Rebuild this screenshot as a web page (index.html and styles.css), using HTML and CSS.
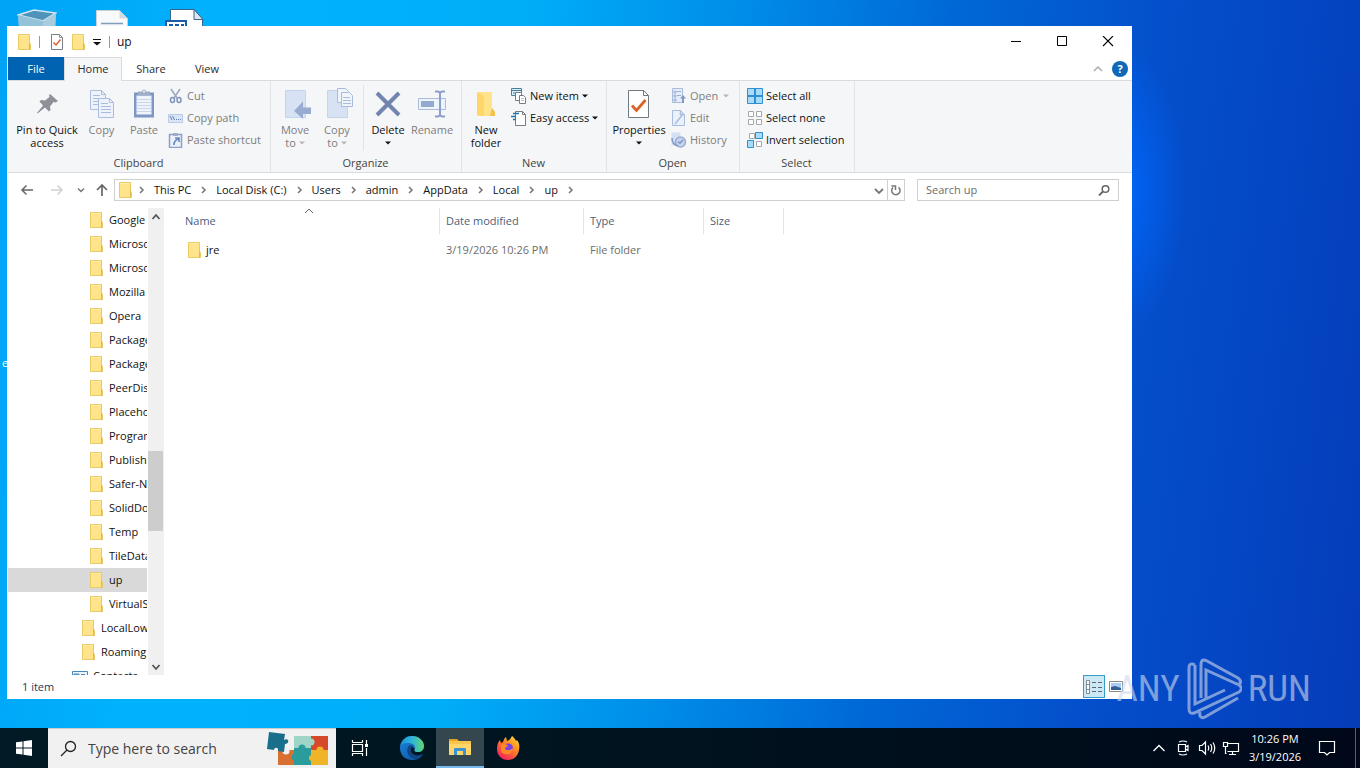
FILE: index.html
```html
<!DOCTYPE html>
<html lang="en">
<head>
<meta charset="utf-8">
<title>up</title>
<link rel="stylesheet" href="styles.css">
</head>
<body>
<svg class="sprite" aria-hidden="true">
  <symbol id="folder" viewBox="0 0 16 16">
    <path d="M1.500.500h11v8.500l1 1.500v5H1.500z" fill="#ffe48c" stroke="#ecca62"/>
    <path d="M12.500 9v6.500" fill="none" stroke="#e3b94a"/>
    <path d="M2.500 1.500h9" stroke="#ffedb0"/>
  </symbol>
  <symbol id="check-page" viewBox="0 0 16 18">
    <path d="M2.500 1.500h8l3 3v12h-11z" fill="#fff" stroke="#777f88"/>
    <path d="M10.500 1.500v3h3" fill="none" stroke="#777f88" stroke-width=".8"/>
    <path d="M4.500 9.500l2.500 2.500 4.500-5.500" fill="none" stroke="#d9602c" stroke-width="1.500"/>
  </symbol>
  <symbol id="caret" viewBox="0 0 6 4"><path d="M0 .5h6L3 3.500z" fill="currentColor"/></symbol>
  <symbol id="crumb" viewBox="0 0 6 8"><path d="M1 1l3 3-3 3" fill="none" stroke="#767676" stroke-width="1.500"/></symbol>
</svg>

<main class="desktop">
  <svg class="desk-icon desk-bin" viewBox="0 0 40 46" role="img" aria-label="Recycle Bin">
    <path d="M1 6l3 38h32l3-38-14 6z" fill="#7fbcda"/>
    <path d="M1 6l16-5 22 3-13 8z" fill="#4f93bb" stroke="#d5e9f3" stroke-width="1.500"/>
    <path d="M26 12l13-8-2 40-12-2z" fill="#a9cddd"/><path d="M1 6l25 6v32H4z" fill="#93c3d8"/>
  </svg>
  <svg class="desk-icon desk-doc" viewBox="0 0 32 42" role="img" aria-label="Document">
    <path d="M.5.500h23l8 8v33H.5z" fill="#f7f9fb" stroke="#c8d0d6"/><path d="M23.500.500v8h8z" fill="#d4dbe0"/>
    <path d="M5 13.500h22M5 17.500h22" stroke="#7f9fb8" stroke-width="1.500"/>
  </svg>
  <svg class="desk-icon desk-word" viewBox="0 0 40 42" role="img" aria-label="Word document">
    <path d="M5.500.500h24l8 10v31h-32z" fill="#fff" stroke="#39648f"/><path d="M29 .500v10h9z" fill="#dfe6ec" stroke="#39648f"/>
    <path d="M1 12h20v20H1z" fill="#fff" stroke="#1a5ca8" stroke-width="2"/>
    <path d="M4 15h4v4H4zM10 15h4v4h-4zM16 15h3v4h-3z" fill="#1a5ca8"/>
  </svg>
  <span class="desk-label">e</span>

  <section class="window" aria-label="up">
    <header class="titlebar">
      <svg class="i16"><use href="#folder"/></svg>
      <span class="tsep"></span>
      <svg class="i18"><use href="#check-page"/></svg>
      <svg class="i16 tfolder"><use href="#folder"/></svg>
      <svg class="qat" viewBox="0 0 8 7"><path d="M0 .5h8" stroke="#111"/><path d="M0 3h8L4 6.500z" fill="#111"/></svg>
      <span class="tsep"></span>
      <h1 class="title">up</h1>
      <div class="caption">
        <button aria-label="Minimize"><svg viewBox="0 0 12 12"><path d="M1 5.500h10" stroke="#000"/></svg></button>
        <button aria-label="Maximize"><svg viewBox="0 0 12 12"><path d="M1.500 .500h9v9h-9z" fill="none" stroke="#000"/></svg></button>
        <button aria-label="Close"><svg viewBox="0 0 12 12"><path d="M1 0l10 10M11 0L1 10" stroke="#000" stroke-width="1.100"/></svg></button>
      </div>
    </header>

    <nav class="tabs">
      <button class="tab file">File</button>
      <button class="tab home">Home</button>
      <button class="tab">Share</button>
      <button class="tab">View</button>
      <div class="tabs-end">
        <button class="plain" aria-label="Minimize the Ribbon"><svg class="i10" viewBox="0 0 10 10"><path d="M1 7l4-4 4 4" fill="none" stroke="#aaa" stroke-width="1.500"/></svg></button>
        <button class="help" aria-label="Help">?</button>
      </div>
    </nav>

    <div class="ribbon">
      <section class="group g-clipboard">
        <div class="tools">
          <button class="big w64"><svg viewBox="0 0 32 32"><path d="M19 6l8 7-2.500 1.500-2-.5-3.500 4.500.5 3.500-1.500 1.500-4-4-7.500 6-.5-.5 6-7.500-3.500-4 1.500-1.500 4 .5 4.500-3.500-.5-1.500z" fill="#8d9197"/></svg>Pin to Quick<br>access</button>
          <button class="big w45 off"><svg viewBox="0 0 32 32"><g fill="#eef3fb" stroke="#a9bcdd"><path d="M4.500 2.500h11l4 4v15h-15z"/><path d="M12.500 10.500h11l4 4v15h-15z"/></g><path d="M7 7.500h7M7 10.500h5M7 13.500h5M7 16.500h5M15 15.500h7M15 18.500h10M15 21.500h10M15 24.500h10M15.500 2.500v4h4M23.500 10.500v4h4" stroke="#a9bcdd" fill="none"/></svg>Copy</button>
          <button class="big w40 off"><svg viewBox="0 0 32 32"><path d="M6 4.500h20v25H6z" fill="#7f97c4"/><path d="M8.500 7.500h15v19h-15z" fill="#eff4fc"/><path d="M9 11.500h14M9 14.500h14M9 17.500h14M9 20.500h14M9 23.500h14" stroke="#c9d6ec"/><path d="M10 3.500h4a2 2 0 014 0h4v4H10z" fill="#a0aec6"/><circle cx="16" cy="3.500" r="1" fill="#fff"/></svg>Paste</button>
          <div class="stack">
            <button class="small off"><svg viewBox="0 0 16 16"><path d="M3 1l6 9M12 1L6 10" stroke="#9aa8c0" stroke-width="1.500"/><g fill="none" stroke="#8195bb" stroke-width="1.500"><ellipse cx="4.500" cy="12" rx="2" ry="2.500"/><ellipse cx="11" cy="12" rx="2" ry="2.500"/></g></svg>Cut</button>
            <button class="small off"><svg viewBox="0 0 16 16"><path d="M.5 4.500h14v8H.5z" fill="#d9e4f5" stroke="#bccbe5"/><path d="M2 6l2 4M4.500 6l2 4M8 9.500h1M10 9.500h1M12 9.500h1" stroke="#6680b5"/></svg>Copy path</button>
            <button class="small off"><svg viewBox="0 0 16 16"><path d="M1.500 2.500h12v13h-12z" fill="#eaf1fb" stroke="#8ba1cb" stroke-width="1.500"/><path d="M5 1h5v3H5z" fill="#a0aec6"/><path d="M7 6h4v4M11 6c-3 2-5 3-5 7" fill="none" stroke="#6f8bbf" stroke-width="1.700"/></svg>Paste shortcut</button>
          </div>
        </div>
        <h2>Clipboard</h2>
      </section>

      <section class="group g-organize">
        <div class="tools">
          <button class="big w42 off"><svg viewBox="0 0 32 32"><path d="M6.500 2.500h20v27h-20z" fill="#d7e3f5" stroke="#c4d4ec"/><path d="M32 19.500h-8v-6l-9 9.500 9 8v-5h8z" fill="#98acd2"/></svg>Move<br>to <svg class="caret"><use href="#caret"/></svg></button>
          <button class="big w42 off"><svg viewBox="0 0 32 32"><path d="M6.500 2.500h20v27h-20z" fill="#d7e3f5" stroke="#c4d4ec"/><g fill="#f0f5fc" stroke="#a9bcdd"><path d="M16.500.500h8l3 3v11h-11z"/><path d="M20.500 4.500h8l3 3v11h-11z"/></g><path d="M22 9.500h7M22 12.500h8M22 15.500h8" stroke="#a9bcdd"/></svg>Copy<br>to <svg class="caret"><use href="#caret"/></svg></button>
          <span class="rsep"></span>
          <button class="big w42"><svg viewBox="0 0 32 32"><path d="M5 5l22 22M27 5L5 27" stroke="#7185ae" stroke-width="4"/></svg>Delete<br><svg class="caret"><use href="#caret"/></svg></button>
          <button class="big w46 off"><svg viewBox="0 0 32 32"><path d="M2.500 10.500h27v11h-27z" fill="#eef4fc" stroke="#a9bcdd"/><path d="M5 13h13v6H5z" fill="#95a9d0"/><path d="M19 3.500h3l2 1 2-1h3M24 4v24M19 28.500h3l2-1 2 1h3" stroke="#8ba0ca" stroke-width="2" fill="none"/></svg>Rename</button>
        </div>
        <h2>Organize</h2>
      </section>

      <section class="group g-new">
        <div class="tools">
          <button class="big w42"><svg viewBox="0 0 32 32"><path d="M7 4h15v16l3 4v4H7z" fill="#ffe28a"/><path d="M7 4l7 4v20l-7-1z" fill="#ffd667"/><path d="M22 20l3 4v4h-5z" fill="#f2c24d"/></svg>New<br>folder</button>
          <div class="stack wide">
            <button class="small"><svg viewBox="0 0 16 16"><path d="M.5.500h10v7h-10z" fill="#d9edf8" stroke="#4c8099"/><path d="M1 2.500h9M2 5h3" stroke="#4c8099"/><path d="M4.500 4.500h5l1 1v7h-6z" fill="#fff" stroke="#6e7f8a"/><path d="M8.500 7.500h4l2 2v6h-6z" fill="#fff" stroke="#6e7f8a"/><path d="M10 10.500h3M10 12.500h3" stroke="#b5c0c8"/></svg>New item<svg class="caret"><use href="#caret"/></svg></button>
            <button class="small"><svg viewBox="0 0 16 16"><path d="M4.500 1.500h7l3 3v11h-10z" fill="#fff" stroke="#747d85"/><path d="M11.500 1.500v3h3" fill="none" stroke="#747d85"/><path d="M2 3.500h6M0 6.500h5M2 9.500h3" stroke="#1f74b5" stroke-width="1.500"/></svg>Easy access<svg class="caret"><use href="#caret"/></svg></button>
          </div>
        </div>
        <h2>New</h2>
      </section>

      <section class="group g-open">
        <div class="tools">
          <button class="big w58"><svg viewBox="0 0 32 32"><path d="M5.500 2.500h15l5 5v22h-20z" fill="#fff" stroke="#707a84"/><path d="M20.500 2.500v5h5" fill="none" stroke="#707a84"/><path d="M9 17.500l4.500 5 9-10.500" fill="none" stroke="#db6329" stroke-width="2.800"/></svg>Properties<br><svg class="caret"><use href="#caret"/></svg></button>
          <div class="stack">
            <button class="small off"><svg viewBox="0 0 16 16"><path d="M1.500.500h10v14h-10z" fill="#e5edf9" stroke="#a9bcdd"/><path d="M3 3h2v2H3zM3 7h2v2H3zM3 11h2v2H3zM6 3.500h4M6 7.500h4" stroke="#9cb0d6" fill="none"/><path d="M12 7l3 3.500h-2V15h-2v-4.500H9z" fill="#8198c7"/></svg>Open <svg class="caret"><use href="#caret"/></svg></button>
            <button class="small off"><svg viewBox="0 0 16 16"><path d="M1.500.500h8l4 4v11h-12z" fill="#eaf1fb" stroke="#a9bcdd"/><path d="M9.500.500v4h4M4 14l8-10" fill="none" stroke="#a9bcdd" stroke-width="1.500"/></svg>Edit</button>
            <button class="small off"><svg viewBox="0 0 16 16"><path d="M.5.500h9v13h-9z" fill="#d3e0f4"/><circle cx="9.500" cy="10" r="5" fill="#c5d3eb" stroke="#98acd4" stroke-width="1.500"/><path d="M12 8l-3 3-2-1M1 6c0 5 2 7 6 8" fill="none" stroke="#7f97c7" stroke-width="1.500"/></svg>History</button>
          </div>
        </div>
        <h2>Open</h2>
      </section>

      <section class="group g-select">
        <div class="tools">
          <div class="stack">
            <button class="small"><svg viewBox="0 0 16 16"><path d="M.5.500h15v15H.5z" fill="#a9dcfb" stroke="#2f8fd0"/><path d="M8 0v16M0 8h16" stroke="#2f8fd0" stroke-width="2"/></svg>Select all</button>
            <button class="small"><svg viewBox="0 0 16 16"><path d="M1.500 1.500h5v5h-5zM9.500 1.500h5v5h-5zM1.500 9.500h5v5h-5zM9.500 9.500h5v5h-5z" fill="#fff" stroke="#a4a8ac"/></svg>Select none</button>
            <button class="small"><svg viewBox="0 0 16 16"><path d="M2.500 1.500h5v5h-5zM9.500 9.500h5v5h-5z" fill="#fff" stroke="#a4a8ac"/><path d="M8.500.500h7v6h-7zM.5 8.500h6v7h-6z" fill="#a9dcfb" stroke="#2f8fd0"/></svg>Invert selection</button>
          </div>
        </div>
        <h2>Select</h2>
      </section>
    </div>

    <div class="navbar">
      <button class="nav-btn" aria-label="Back"><svg viewBox="0 0 14 12"><path d="M13 6H2M6.500 1.500L2 6l4.500 4.500" fill="none" stroke="#666" stroke-width="1.500"/></svg></button>
      <button class="nav-btn" aria-label="Forward"><svg viewBox="0 0 14 12"><path d="M1 6h11M7.500 1.500L12 6l-4.500 4.500" fill="none" stroke="#d2d2d2" stroke-width="1.500"/></svg></button>
      <button class="nav-btn recent" aria-label="Recent locations"><svg viewBox="0 0 14 12"><path d="M4 4.500l3 3 3-3" fill="none" stroke="#777" stroke-width="1.500"/></svg></button>
      <button class="nav-btn go-up" aria-label="Up"><svg viewBox="0 0 14 12"><path d="M7 12V1.500M2 6l5-5 5 5" fill="none" stroke="#666" stroke-width="1.700"/></svg></button>
      <div class="address">
        <svg class="i16"><use href="#folder"/></svg>
        <svg class="crumb first"><use href="#crumb"/></svg>
        <a href="#">This PC</a><svg class="crumb"><use href="#crumb"/></svg>
        <a href="#">Local Disk (C:)</a><svg class="crumb"><use href="#crumb"/></svg>
        <a href="#">Users</a><svg class="crumb"><use href="#crumb"/></svg>
        <a href="#">admin</a><svg class="crumb"><use href="#crumb"/></svg>
        <a href="#">AppData</a><svg class="crumb"><use href="#crumb"/></svg>
        <a href="#">Local</a><svg class="crumb"><use href="#crumb"/></svg>
        <a href="#">up</a><svg class="crumb"><use href="#crumb"/></svg>
        <button class="plain addr-drop" aria-label="Previous locations"><svg class="i10" viewBox="0 0 10 10"><path d="M1 4l4 4 4-4" fill="none" stroke="#777" stroke-width="1.800"/></svg></button>
        <button class="plain refresh" aria-label="Refresh"><svg viewBox="0 0 12 12"><path d="M3 3.500A4.200 4.200 0 108.500 3.300" fill="none" stroke="#777" stroke-width="1.500"/><path d="M1.500 2h4v4" fill="none" stroke="#777" stroke-width="1.500"/></svg></button>
      </div>
      <div class="search">
        <input type="text" placeholder="Search up" aria-label="Search up">
        <svg viewBox="0 0 12 12"><circle cx="7.500" cy="5" r="3.300" fill="none" stroke="#666" stroke-width="1.500"/><path d="M5 7.500L1 11.500" stroke="#666" stroke-width="1.800"/></svg>
      </div>
    </div>

    <div class="content">
      <ul class="tree">
        <li><svg class="i16"><use href="#folder"/></svg>Google</li>
        <li><svg class="i16"><use href="#folder"/></svg>Microsoft</li>
        <li><svg class="i16"><use href="#folder"/></svg>Microsoft</li>
        <li><svg class="i16"><use href="#folder"/></svg>Mozilla</li>
        <li><svg class="i16"><use href="#folder"/></svg>Opera</li>
        <li><svg class="i16"><use href="#folder"/></svg>Package</li>
        <li><svg class="i16"><use href="#folder"/></svg>Packages</li>
        <li><svg class="i16"><use href="#folder"/></svg>PeerDist</li>
        <li><svg class="i16"><use href="#folder"/></svg>Placeholder</li>
        <li><svg class="i16"><use href="#folder"/></svg>Programs</li>
        <li><svg class="i16"><use href="#folder"/></svg>Publishers</li>
        <li><svg class="i16"><use href="#folder"/></svg>Safer-Net</li>
        <li><svg class="i16"><use href="#folder"/></svg>SolidDocs</li>
        <li><svg class="i16"><use href="#folder"/></svg>Temp</li>
        <li><svg class="i16"><use href="#folder"/></svg>TileData</li>
        <li class="current"><svg class="i16"><use href="#folder"/></svg>up</li>
        <li><svg class="i16"><use href="#folder"/></svg>VirtualStore</li>
        <li class="l2"><svg class="i16"><use href="#folder"/></svg>LocalLow</li>
        <li class="l2"><svg class="i16"><use href="#folder"/></svg>Roaming</li>
        <li class="l1"><svg class="i16" viewBox="0 0 16 16"><path d="M.5 3.500h15v11H.5z" fill="#e9f4fb" stroke="#4a88b5"/><path d="M2 6h5v6H2zM9 6.500h4M9 9.500h4" fill="#7db4d8" stroke="#4a88b5"/></svg>Contacts</li>
      </ul>
      <div class="scroll">
        <button class="plain" aria-label="Scroll up"><svg class="i10" viewBox="0 0 10 10"><path d="M1.500 7L5 3l3.500 4" fill="none" stroke="#555" stroke-width="1.800"/></svg></button>
        <span class="above"></span><span class="thumb"></span><span class="below"></span>
        <button class="plain" aria-label="Scroll down"><svg class="i10" viewBox="0 0 10 10"><path d="M1.500 3L5 7l3.500-4" fill="none" stroke="#555" stroke-width="1.800"/></svg></button>
      </div>
      <div class="files">
        <table>
          <colgroup><col class="c-name"><col class="c-date"><col class="c-type"><col class="c-size"></colgroup>
          <thead><tr><th>Name<svg class="sort" viewBox="0 0 10 6"><path d="M1 5l4-4 4 4" fill="none" stroke="#666"/></svg></th><th>Date modified</th><th>Type</th><th>Size</th></tr></thead>
          <tbody><tr><td class="name"><span><svg class="i16"><use href="#folder"/></svg>jre</span></td><td>3/19/2026 10:26 PM</td><td>File folder</td><td></td></tr></tbody>
        </table>
      </div>
    </div>

    <footer class="status">
      <span>1 item</span>
      <div class="views">
        <button class="on" aria-label="Details"><svg viewBox="0 0 18 14"><path d="M1.500.500h3v13h-3zM1.500 4.500h3M1.500 9.500h3" fill="#fff" stroke="#7f8b93"/><path d="M7 2.500h4M13 2.500h4M7 7.500h4M13 7.500h4M7 11.500h4M13 11.500h4" stroke="#5b666e"/></svg></button>
        <button aria-label="Large thumbnails"><svg class="thumbs" viewBox="0 0 14 12"><path d="M.5.500h13v10H.5z" fill="#fff" stroke="#8b8b8b"/><path d="M2 2h10v7H2z" fill="#a9cdf0"/><path d="M2 6l4-1 6 2v2H2z" fill="#345f96"/></svg></button>
      </div>
    </footer>
  </section>

  <div class="watermark">
    <span>ANY</span>
    <svg viewBox="0 0 56 62"><path d="M9 7c-4-2-6-1-6 3V51c0 4 2 5 5 4l45-21c3-2 3-5 0-7L20 12v28M9 7v39l30-14M15 40V7c0-5 2-6 6-4l31 17c4 3 3 7-1 6M14 54c-1 4 1 7 5 5l33-19" fill="none" stroke="currentColor" stroke-width="3"/></svg>
    <span>RUN</span>
  </div>
</main>

<footer class="taskbar">
  <button class="start" aria-label="Start"><svg viewBox="0 0 16 16"><path d="M0 2.300L6.500 1.400v6.100H0zM7.500 1.300L16 0v7.500H7.500zM0 8.500h6.500v6.100L0 13.700zM7.500 8.500H16V16l-8.500-1.300z" fill="#fff"/></svg></button>
  <div class="task-search">
    <svg class="lens" viewBox="0 0 18 18"><circle cx="10.500" cy="6.500" r="5" fill="none" stroke="#222" stroke-width="1.300"/><path d="M7 10l-6 6" stroke="#222" stroke-width="1.300"/></svg>
    <input type="text" placeholder="Type here to search" aria-label="Type here to search">
    <svg class="puzzle" viewBox="0 0 64 36">
      <path d="M28 5h17v13H28z" fill="#9fd5c6"/><path d="M45 5h17v15H45z" fill="#d6492b"/><path d="M12 19h17v15H12z" fill="#d97032"/><path d="M28 17h18v17H28z" fill="#2b9c9c"/><path d="M45 19h17v15H45z" fill="#f0b429"/>
      <circle cx="45" cy="11" r="3.500" fill="#9fd5c6"/><circle cx="36" cy="17" r="3.500" fill="#2b9c9c"/><circle cx="54" cy="19" r="3.500" fill="#f0b429"/><circle cx="29" cy="26" r="3.500" fill="#2b9c9c"/><circle cx="46" cy="27" r="3" fill="#f0b429"/><circle cx="20" cy="20" r="3.500" fill="#f0f0f0"/>
      <path d="M3 1l16 2-1 6c5-3 6 4 1 4l-1 8-6-1c1-4-4-4-4-1l-7-1z" fill="#196e8b"/>
    </svg>
  </div>
  <button class="task" aria-label="Task View"><svg viewBox="0 0 18 18"><path d="M1.500 5.500h10v7h-10zM1.500 1v2.500M11.500 1v2.500M1.500 3.500h10M1.500 17v-2.500h10V17M15.500 1v4M15.500 9v8" fill="none" stroke="#fff" stroke-width="1.200"/><path d="M14 5h3v3h-3z" fill="#fff"/></svg></button>
  <div class="apps">
    <button class="task" aria-label="Microsoft Edge"><svg class="app" viewBox="0 0 24 24">
      <defs>
        <linearGradient id="eg" x1="0" x2="1"><stop offset="0" stop-color="#1793d9"/><stop offset=".5" stop-color="#2fb5dc"/><stop offset="1" stop-color="#62d66d"/></linearGradient>
        <linearGradient id="eb" x1="0" y1="0" x2="1" y2="1"><stop offset="0" stop-color="#1a86dd"/><stop offset="1" stop-color="#0f4f9c"/></linearGradient>
      </defs>
      <path d="M0 12C0 5 5 0 12 0s12 5 12 10c0 4-3 6-6 6-4 0-4-2-3-3l-4-3c-3 4 1 10 6 10 2 0 4-1 6-2-2 4-6 6-11 6C5 24 0 19 0 12z" fill="url(#eb)"/>
      <path d="M0 11C2 3 7 0 12 0c7 0 12 5 12 10 0 4-3 6-6 6-4 0-4-2-3-3 1-4-3-6-7-6-4 0-7 1-8 4z" fill="url(#eg)"/>
      <path d="M8 11c-2 4 0 11 7 12 3 0 6-2 8-5-5 3-12 1-12-4 0-2 1-3 2-4-2-1-4-1-5 1z" fill="#0e4686"/></svg></button>
    <button class="task active" aria-label="File Explorer"><svg class="app" viewBox="0 0 24 24"><path d="M1 4h8l2 2h11v4H1z" fill="#e6a023"/><path d="M1 6h22v14H1z" fill="#ffd667"/><path d="M1 6h22v3H1z" fill="#f8c64c"/><path d="M6 20v-6q0-1 1-1h10q1 0 1 1v6h-3v-4H9v4z" fill="#3c91d6"/></svg></button>
    <button class="task" aria-label="Firefox"><svg class="app" viewBox="0 0 24 24">
      <defs><linearGradient id="fg" x1="1" y1="0" x2=".3" y2="1"><stop offset="0" stop-color="#ffe73d"/><stop offset=".45" stop-color="#ff8a1f"/><stop offset="1" stop-color="#f5225e"/></linearGradient></defs>
      <path d="M12 24C5 24 1 19 1 13c0-4 1-7 3-9l1 3 2-1c1-2 1-4 3-5l1 4c2 0 4-3 5-5 3 2 4 5 4 5l1-1c2 3 3 5 2 10-1 6-5 10-11 10z" fill="url(#fg)"/><circle cx="12.500" cy="12" r="4.500" fill="#7542e5"/><path d="M5 9c3-1 6-1 7 1l-3 2c0 3 5 3 8 0 0 6-9 9-12 3z" fill="#ff8a25"/></svg></button>
  </div>
  <div class="tray">
    <button class="tray-btn" aria-label="Show hidden icons"><svg viewBox="0 0 18 18"><path d="M3.500 12L9 6.500l5.500 5.500" fill="none" stroke="#fff" stroke-width="1.300"/></svg></button>
    <button class="tray-btn" aria-label="Camera"><svg viewBox="0 0 18 18"><path d="M4.500 5.500h7v7h-7zM11.500 8l2.500-1.500v5L11.500 10M5 3q4-2 8 0M5 15q4 2 8 0" fill="none" stroke="#fff" stroke-width="1.200"/></svg></button>
    <button class="tray-btn" aria-label="Volume"><svg viewBox="0 0 18 18"><path d="M1.500 6.500h2.500l3.500-3.500v12L4 11.500H1.500zM10 6.500q1.500 2.500 0 5M12.500 5q2.500 4 0 8M15 3.500q3.500 5.500 0 11" fill="none" stroke="#fff" stroke-width="1.200"/></svg></button>
    <button class="tray-btn" aria-label="Network"><svg viewBox="0 0 18 18"><path d="M6 4.500h10.500v8H5.500M10.500 12.500V15M7 15.500h7M1.500 3.500h4v4h-4zM3.500 7.500v7h1" fill="none" stroke="#fff" stroke-width="1.200"/></svg></button>
    <time class="clock">10:26 PM<br>3/19/2026</time>
    <button class="notes" aria-label="Notifications"><svg viewBox="0 0 18 18"><path d="M1.500 2.500h15v11h-5L9 16l-2.500-2.500h-5z" fill="none" stroke="#fff" stroke-width="1.200"/></svg></button>
    <button class="peek" aria-label="Show desktop"></button>
  </div>
</footer>
</body>
</html>
```
FILE: styles.css
```css
* { box-sizing: border-box; }
body {
  margin: 0;
  height: 100vh;
  display: flex;
  flex-direction: column;
  overflow: hidden;
  font: 11px/16px "Open Sans", "Noto Sans", sans-serif;
  color: #111;
}
button {
  font: inherit;
  color: inherit;
  background: none;
  border: 0;
  padding: 0;
  display: flex;
  align-items: center;
  justify-content: center;
}
svg { display: block; flex: none; }
h1, h2 { margin: 0; font: inherit; }
.sprite { position: absolute; width: 0; height: 0; }
.i16 { width: 16px; height: 16px; }
.i18 { width: 16px; height: 18px; }
.i10 { width: 10px; height: 10px; }

.desktop {
  position: relative;
  flex: 1;
  min-height: 0;
  overflow: hidden;
  background:
    radial-gradient(ellipse 70px 150px at 82% 26%, rgba(0, 104, 255, .95), rgba(0, 104, 255, 0)),
    linear-gradient(97deg, #00a3f6 0%, #00b2fc 15%, #00aef8 36%, #0090ea 50%, #0068d6 66%, #0450cc 80%, #0446c4 90%, #053cb8 100%);
}
.desk-icon { position: absolute; }
.desk-bin { left: 17px; top: 9px; width: 40px; height: 46px; }
.desk-doc { left: 96px; top: 10px; width: 32px; height: 42px; }
.desk-word { left: 165px; top: 9px; width: 40px; height: 42px; }
.desk-label { position: absolute; left: 2px; top: 355px; color: #fff; }

.window {
  position: absolute;
  inset: 26px 228px 29px 7px;
  padding-left: 1px;
  display: flex;
  flex-direction: column;
  background: #fff;
}
.titlebar { display: flex; align-items: center; height: 31px; padding-left: 9px; flex: none; }
.tsep { width: 1px; height: 12px; background: #999; margin: 0 9px 0 6px; }
.tfolder { margin-left: 6px; }
.qat { width: 8px; height: 7px; margin: 2px 0 0 6px; }
.qat + .tsep { margin: 0 7px 0 8px; }
.title { font-size: 12px; }
.caption { display: flex; margin-left: auto; padding-right: 1px; align-self: stretch; }
.caption button { width: 46px; }
.caption svg { width: 12px; height: 12px; }

.tabs { display: flex; height: 24px; flex: none; border-bottom: 1px solid #dadbdc; }
.tab { width: 56px; height: 23px; color: #2b2b2b; }
.tab.file { background: #0063b1; color: #fff; }
.tab.home { width: 58px; height: 24px; padding-bottom: 2px; background: #f5f6f7; border: 1px solid #dadbdc; border-bottom: 0; }
.tab.home + .tab { width: 58px; }
.tab.home ~ .tab:nth-child(4) { width: 54px; }
.tabs-end { display: flex; align-items: center; gap: 6px; margin-left: auto; padding-right: 4px; }
.help { width: 16px; height: 16px; border-radius: 50%; background: #1068b8; color: #fff; font-weight: 700; }

.ribbon { display: flex; flex: none; height: 92px; background: #f5f6f7; border-bottom: 1px solid #dadbdc; }
.group { display: flex; flex-direction: column; padding: 4px 0 1px; border-right: 1px solid #e2e3e4; flex: none; }
.tools { display: flex; flex: 1; }
.group h2 { padding-right: 1px; text-align: center; color: #444; }
.g-clipboard { width: 263px; }
.g-clipboard .tools { padding-left: 7px; }
.g-organize { width: 191px; }
.g-new { width: 145px; }
.g-open { width: 133px; }
.g-select { width: 115px; }
.g-select .tools { padding-left: 4px; }
.g-organize .tools, .g-new .tools, .g-open .tools { padding-left: 3px; }
.big { display: block; padding-top: 3px; line-height: 13px; text-align: center; white-space: nowrap; align-self: flex-start; }
.big > svg:first-child { width: 32px; height: 32px; margin: 0 auto 3px; }
.big .caret { display: inline-block; vertical-align: 2px; }
.caret { width: 6px; height: 4px; }
.w40 { width: 40px; }
.w42 { width: 42px; }
.w45 { width: 45px; }
.w46 { width: 46px; }
.w58 { width: 58px; }
.w64 { width: 64px; }
.off { color: #7d7d7d; }
.off .caret { color: #b5b5b5; }
.rsep { width: 1px; height: 66px; background: #e2e3e4; margin: 0 3px 0 5px; }
.stack { display: flex; flex-direction: column; padding-left: 4px; }
.g-open .stack, .g-select .stack { padding-left: 3px; }
.small { justify-content: flex-start; gap: 3px; height: 22px; white-space: nowrap; }
.small > svg:first-child { width: 16px; height: 16px; }
.stack .off .caret { margin-left: 2px; }

.navbar { display: flex; align-items: center; flex: none; height: 35px; padding: 0 13px 1px 4px; }
.nav-btn { width: 30px; }
.nav-btn svg { width: 14px; height: 12px; }
.nav-btn.recent { width: 17px; }
.nav-btn.go-up { width: 25px; }
.address { display: flex; align-items: center; flex: 1; min-width: 0; height: 22px; padding-left: 3px; border: 1px solid #d0d0d0; }
.address a { color: #111; text-decoration: none; white-space: nowrap; }
.crumb { width: 6px; height: 8px; margin: 0 9px 0 10px; }
.crumb.first { margin-left: 5px; }
.plain { min-width: 16px; }
.addr-drop { margin-left: auto; }
.refresh { width: 17px; align-self: stretch; border-left: 1px solid #d0d0d0; }
.refresh svg { width: 12px; height: 12px; }
.search { display: flex; align-items: center; width: 202px; height: 22px; margin-left: 12px; padding: 0 8px; border: 1px solid #d0d0d0; }
.search input { flex: 1; min-width: 0; border: 0; padding: 0; outline: 0; font: inherit; background: none; }
.search input::placeholder { color: #6d6d6d; opacity: 1; }
.search svg { width: 12px; height: 12px; }

.content { display: flex; flex: 1; min-height: 0; }
.tree { width: 139px; flex: none; margin: 0; padding: 0; overflow: hidden; list-style: none; }
.tree li { display: flex; align-items: center; gap: 4px; height: 24px; padding-left: 81px; white-space: nowrap; }
.tree .current { background: #d9d9d9; }
.tree .l2 { padding-left: 73px; }
.tree .l1 { padding-left: 64px; gap: 5px; }
.scroll { display: flex; flex-direction: column; flex: none; width: 16px; margin-left: 1px; background: #f0f0f0; }
.scroll .plain { height: 17px; flex: none; }
.above { flex: 226 0 0; }
.thumb { flex: 80 0 0; background: #cdcdcd; margin-right: 1px; }
.below { flex: 127 0 0; }
.files { flex: 1; min-width: 0; padding-left: 15px; }
table { table-layout: fixed; border-spacing: 0; width: 605px; }
.c-name { width: 261px; }
.c-date { width: 144px; }
.c-type { width: 120px; }
.c-size { width: 80px; }
th { position: relative; height: 26px; padding: 0 6px; border-right: 1px solid #e5e5e5; text-align: left; font-weight: 400; color: #4c607a; }
td { height: 32px; padding: 0 6px; color: #6d6d6d; }
.name span { display: flex; align-items: center; gap: 3px; padding-left: 2px; color: #111; }
.sort { position: absolute; left: 50%; top: 0; width: 10px; height: 6px; margin-left: -5px; }

.status { display: flex; align-items: center; flex: none; height: 24px; padding: 0 5px 0 14px; color: #1e395b; }
.views { display: flex; margin-left: auto; align-self: flex-start; }
.views button { width: 22px; height: 23px; }
.views .on { background: #cce8f5; border: 1px solid #3a9ccb; }
.views svg { width: 18px; height: 14px; }
.views .thumbs { width: 14px; height: 12px; }

.watermark {
  position: absolute;
  right: 49px;
  bottom: 8px;
  display: flex;
  align-items: center;
  gap: 6px;
  color: #d0d9ea;
  opacity: .6;
  font: 37px/62px "Roboto Condensed", "Open Sans Condensed", Roboto, sans-serif;
}
.watermark svg { width: 56px; height: 62px; }

.taskbar { display: flex; flex: none; height: 40px; background: linear-gradient(90deg, #001b25, #00131e 50%, #000819); color: #fff; }
.start { width: 48px; }
.start svg { width: 16px; height: 16px; }
.task-search { display: flex; align-items: center; width: 288px; padding: 0 6px 0 12px; background: #f1f1f1; border-top: 1px solid #ccc; }
.lens { width: 18px; height: 18px; }
.task-search input { flex: 1; min-width: 0; margin-left: 10px; padding: 0; border: 0; outline: 0; background: none; font: 14px/20px "Open Sans", "Noto Sans", sans-serif; }
.task-search input::placeholder { color: #444; opacity: 1; }
.puzzle { width: 64px; height: 36px; }
.task { width: 48px; }
.task svg { width: 18px; height: 18px; }
.task .app { width: 24px; height: 24px; }
.apps { display: flex; margin-left: 4px; }
.active { background: #34474f; border-bottom: 2px solid #76b9ed; }
.tray { display: flex; margin-left: auto; }
.tray-btn { width: 24px; }
.tray-btn svg, .notes svg { width: 18px; height: 18px; }
.clock { width: 64px; padding-top: 2px; line-height: 18px; text-align: center; }
.notes { width: 40px; }
.peek { width: 5px; margin-left: 8px; border-left: 1px solid #5b626b; }
```
